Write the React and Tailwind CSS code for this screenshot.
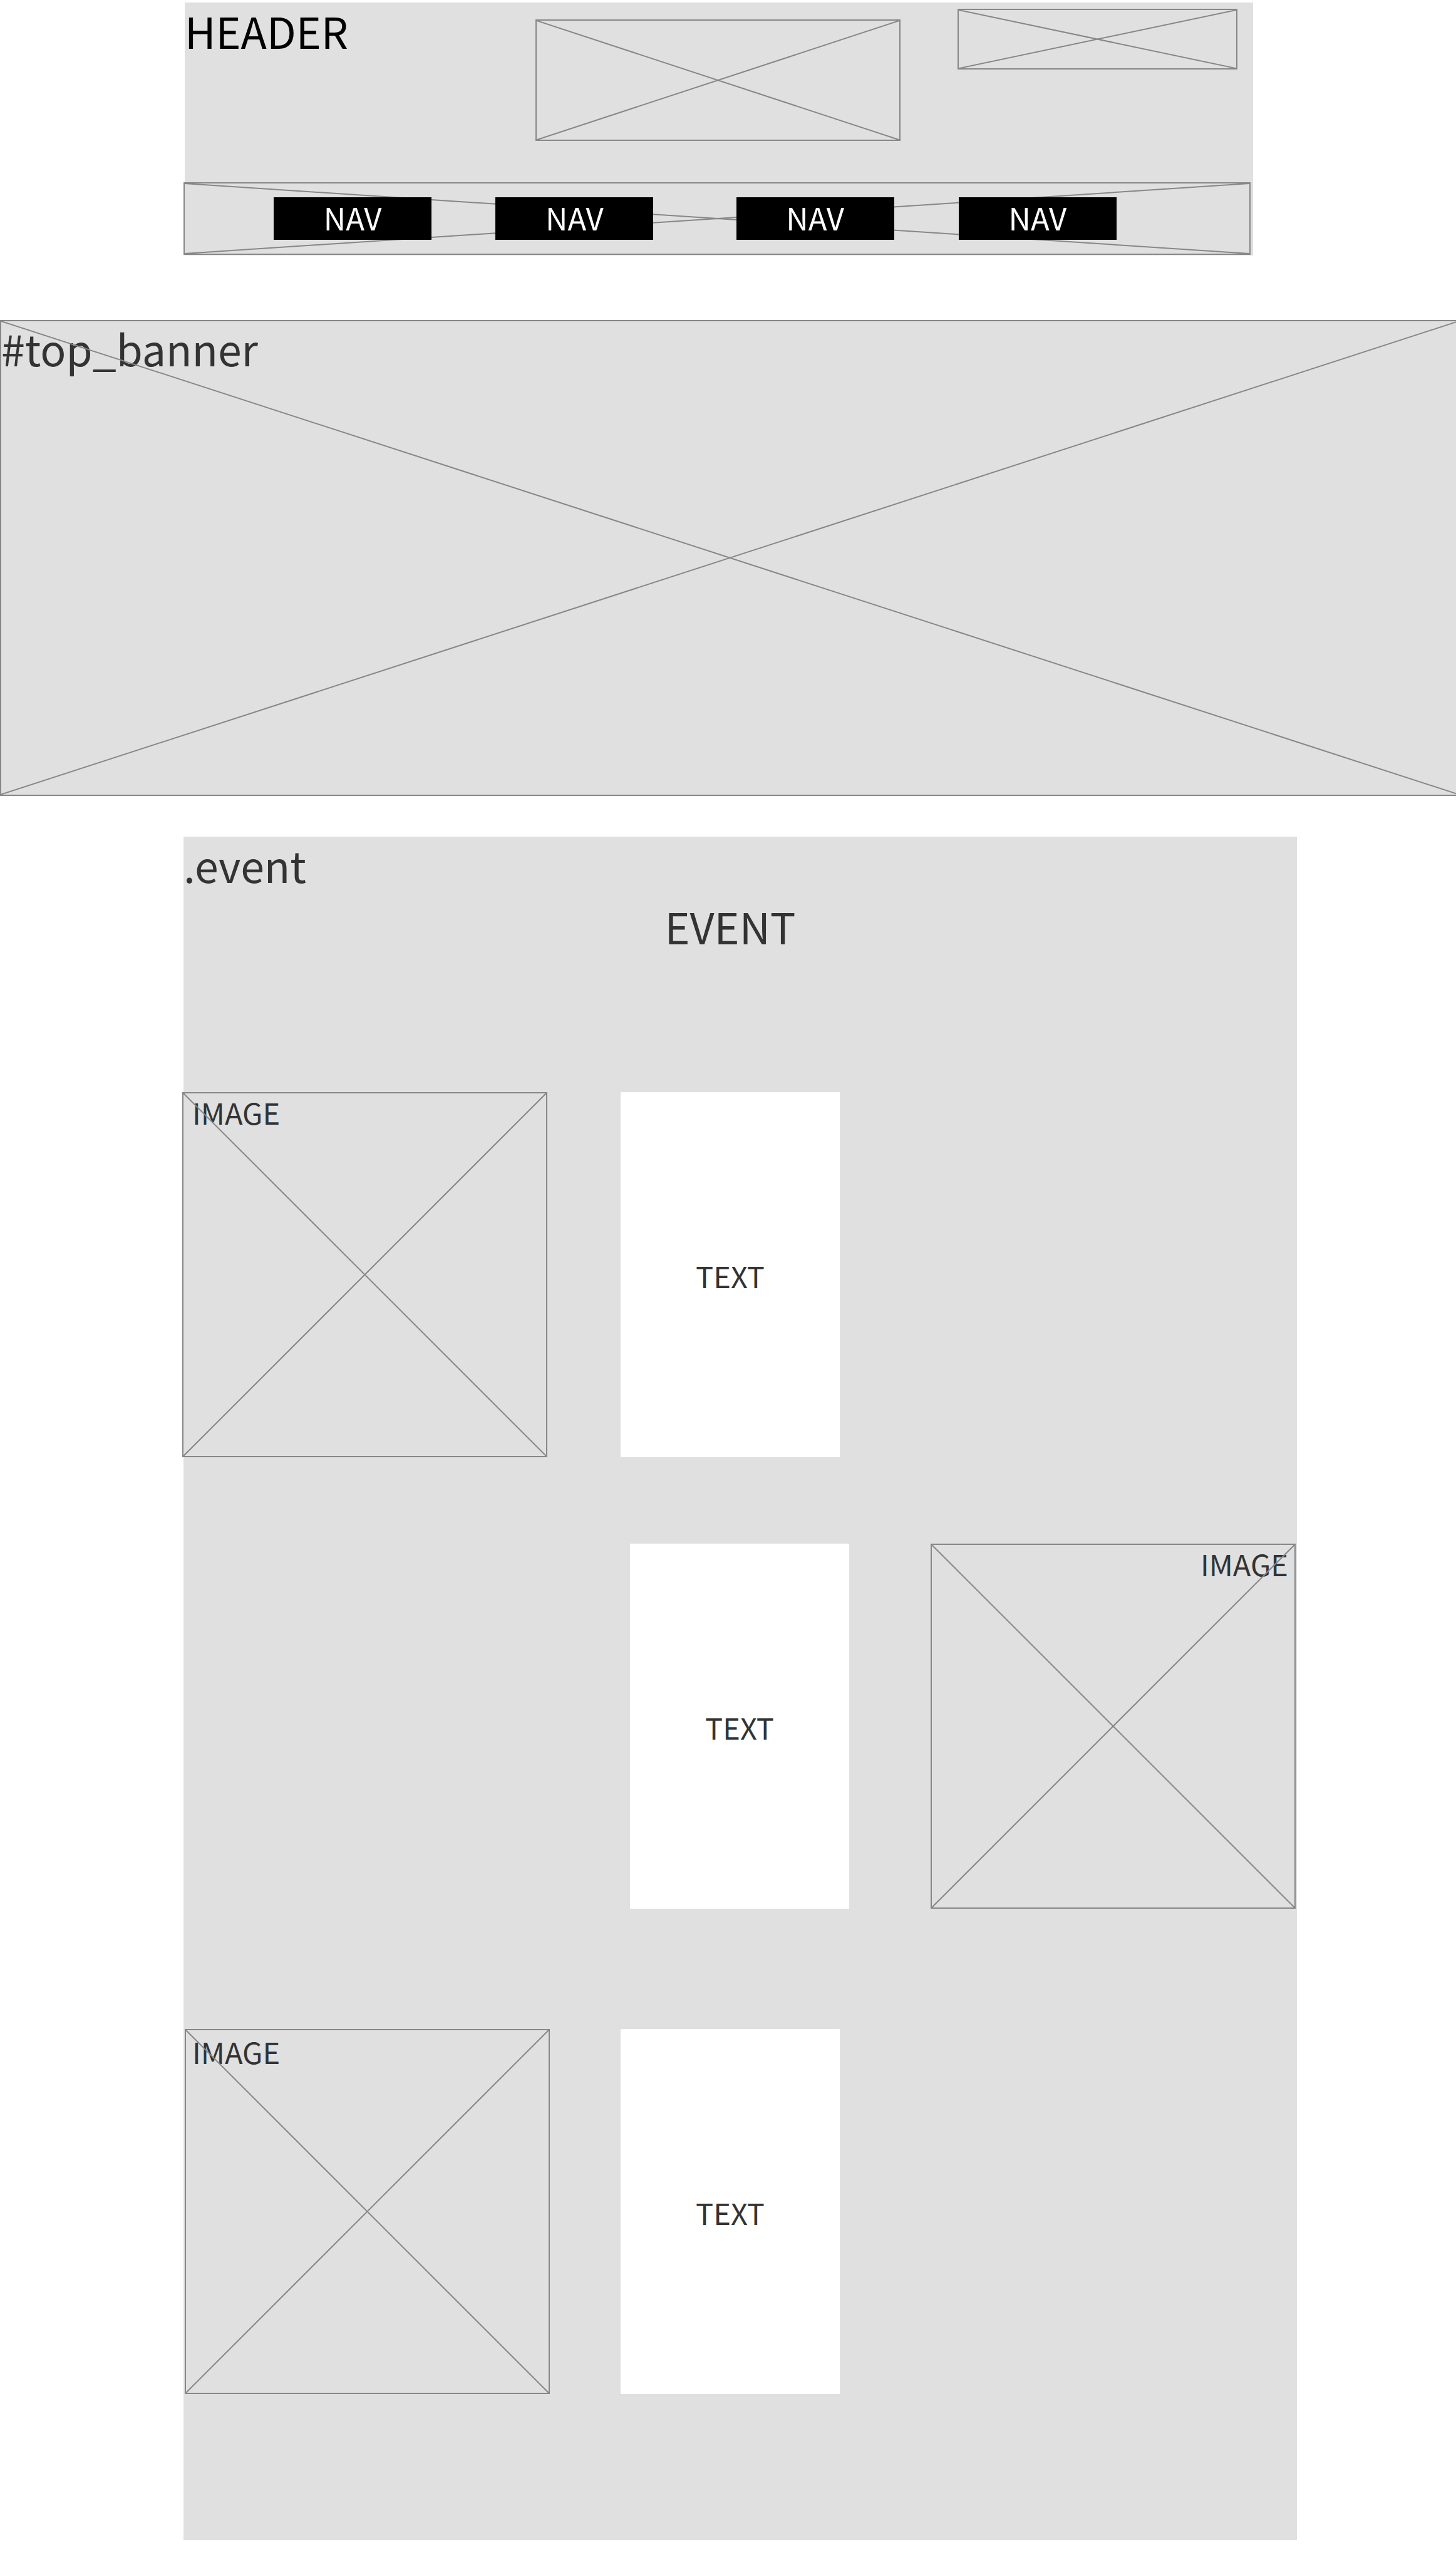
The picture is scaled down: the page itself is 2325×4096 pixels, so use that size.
const heading = "text-[68px] leading-[86px]";
const caption = "text-[47px] leading-[60px]";

function CrossBox({ className = "", children }) {
  return (
    <div className={`relative border-2 border-[#878787] ${className}`}>
      {children}
      <svg
        className="pointer-events-none absolute inset-0 h-full w-full"
        viewBox="0 0 100 100"
        preserveAspectRatio="none"
        aria-hidden="true"
      >
        <path
          d="M0 0L100 100M0 100L100 0"
          fill="none"
          stroke="#878787"
          strokeWidth="2"
          vectorEffect="non-scaling-stroke"
        />
      </svg>
    </div>
  );
}

function ImageBox({ className = "" }) {
  return (
    <CrossBox className={`aspect-square ${caption} ${className}`}>IMAGE</CrossBox>
  );
}

function TextBox() {
  return (
    <div className={`flex items-center justify-center bg-white pt-1 ${caption}`}>
      TEXT
    </div>
  );
}

function NavLink({ className }) {
  return (
    <a
      href="#"
      className={`relative z-10 flex h-17 items-center justify-center bg-black pb-1 text-[49px] leading-[60px] text-white ${className}`}
    >
      NAV
    </a>
  );
}

function Header() {
  return (
    <div className="grid grid-cols-[295fr_1706fr_324fr]">
      <header className="col-start-2 bg-[#e0e0e0] pb-px text-black">
        <div className="grid grid-cols-[560fr_583fr_91fr_447fr_25fr] items-start pb-[66px]">
          <h1 className={`pt-0.5 ${heading}`}>HEADER</h1>
          <CrossBox className="mt-[27px] aspect-[3/1]" />
          <CrossBox className="col-start-4 mt-2.5 aspect-[23/5]" />
        </div>
        <CrossBox className="-ml-0.5 mr-1 bg-[#e0e0e0] py-[22px]">
          <nav className="grid grid-cols-[142fr_252fr_102fr_252fr_132fr_252fr_103fr_252fr_212fr]">
            <NavLink className="col-start-2" />
            <NavLink className="col-start-4" />
            <NavLink className="col-start-6" />
            <NavLink className="col-start-8" />
          </nav>
        </CrossBox>
      </header>
    </div>
  );
}

function Events() {
  return (
    <div className="grid grid-cols-[293fr_1778fr_254fr]">
      <section className="col-start-2 bg-[#e0e0e0] pb-[233px] pt-0.5">
        <p className={heading}>.event</p>
        <div className="grid grid-cols-[698fr_350fr_730fr] pb-[222px] pt-3">
          <h2 className={`col-start-2 text-center ${heading}`}>EVENT</h2>
        </div>
        <div className="-ml-0.5 grid grid-cols-[583fr_117fr_350fr_730fr]">
          <ImageBox className="bg-[#e0e0e0] pl-3.5" />
          <div />
          <TextBox />
        </div>
        <div className="mt-[138px] grid grid-cols-[713fr_350fr_130fr_583fr_2fr]">
          <div />
          <TextBox />
          <div />
          <ImageBox className="pr-2.5 text-right" />
        </div>
        <div className="ml-0.5 mt-48 grid grid-cols-[583fr_113fr_350fr_730fr]">
          <ImageBox className="pl-2.5 pt-1" />
          <div />
          <TextBox />
        </div>
      </section>
    </div>
  );
}

export default function App() {
  return (
    <div className="overflow-hidden bg-white pb-10 pt-1 font-['Noto_Sans_CJK_KR','Noto_Sans',sans-serif] text-[#333333]">
      <Header />
      <main>
        <section id="top_banner" className="-mr-1.5 mt-[103px]">
          <CrossBox className={`aspect-[2400/782] bg-[#e0e0e0] ${heading}`}>
            #top_banner
          </CrossBox>
        </section>
        <div className="mt-[65px]">
          <Events />
        </div>
      </main>
    </div>
  );
}
